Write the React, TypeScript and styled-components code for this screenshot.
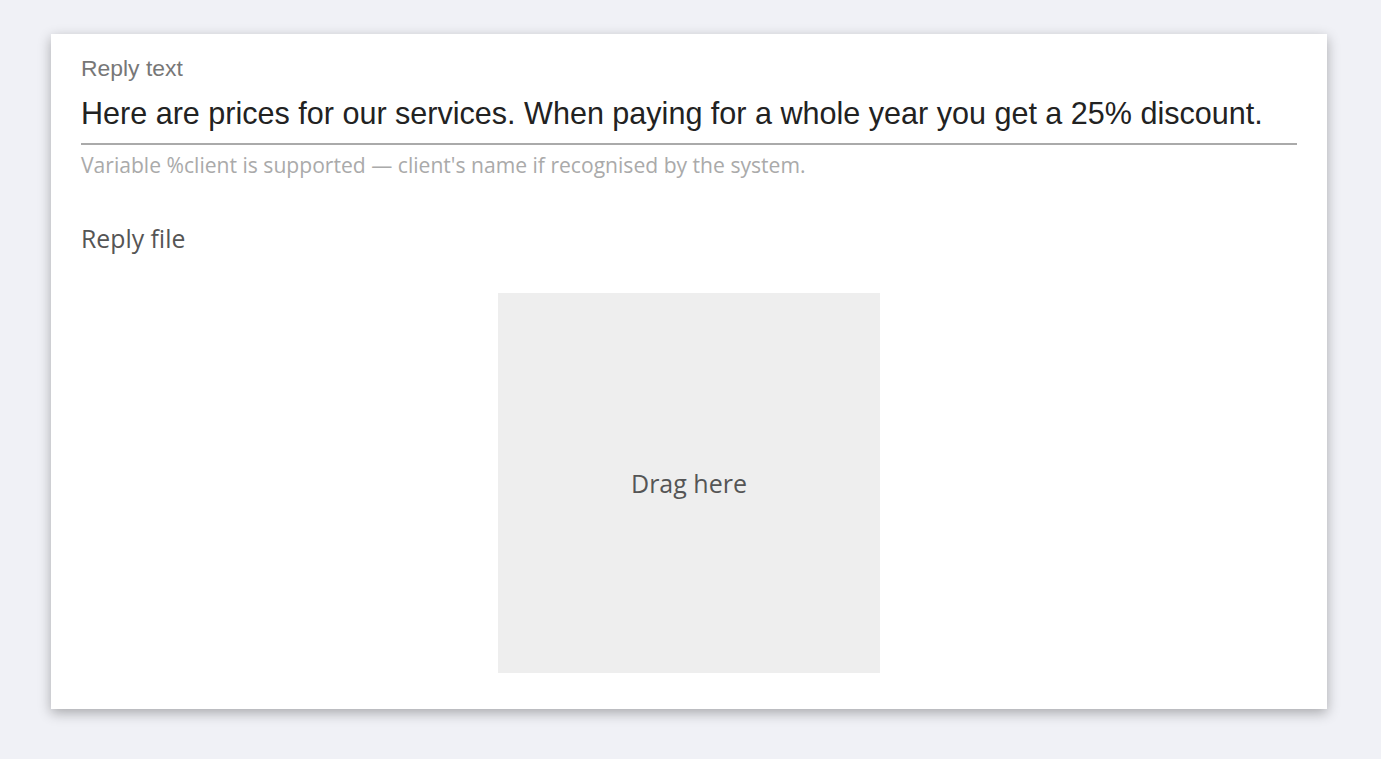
import React from "react";
import styled, { createGlobalStyle } from "styled-components";

const Global = createGlobalStyle`
  html, body { margin: 0; padding: 0; background: #f0f1f6; }
  body { font-family: "Open Sans", sans-serif; }
`;

const Page = styled.div`
  padding: 34px 54px 50px 51px;
`;

const Card = styled.div`
  background: #fff;
  box-shadow: 0 4px 12px rgba(0, 0, 0, 0.3);
  padding: 20px 30px 36px 30px;
  display: flex;
  flex-direction: column;
`;

const FieldLabel = styled.div`
  font-family: "Liberation Sans", Arial, sans-serif;
  font-size: 22.9px;
  line-height: 28px;
  color: #777;
`;

const TextInput = styled.input`
  font-family: "Liberation Sans", Arial, sans-serif;
  font-size: 30.55px;
  line-height: 36px;
  height: 36px;
  box-sizing: content-box;
  color: #222;
  border: none;
  border-bottom: 2px solid #aaa;
  outline: none;
  padding: 11px 0 12px 0;
  margin: 2px 0 0 0;
  background: transparent;
  width: 100%;
`;

const Hint = styled.div`
  font-size: 21.1px;
  color: #aaa;
  margin-top: 6px;
  line-height: 28px;
`;

const SectionTitle = styled.div`
  font-size: 24.8px;
  color: #555;
  margin-top: 42px;
  line-height: 34px;
`;

const DropZone = styled.div`
  align-self: center;
  width: 382px;
  height: 380px;
  margin-top: 38px;
  background: #eee;
  display: flex;
  align-items: center;
  justify-content: center;
  font-size: 25px;
  color: #555;
`;

export default function App() {
  return (
    <>
      <Global />
      <Page>
        <Card>
          <FieldLabel>Reply text</FieldLabel>
          <TextInput
            readOnly
            value="Here are prices for our services. When paying for a whole year you get a 25% discount."
          />
          <Hint>Variable %client is supported — client's name if recognised by the system.</Hint>
          <SectionTitle>Reply file</SectionTitle>
          <DropZone>Drag here</DropZone>
        </Card>
      </Page>
    </>
  );
}
